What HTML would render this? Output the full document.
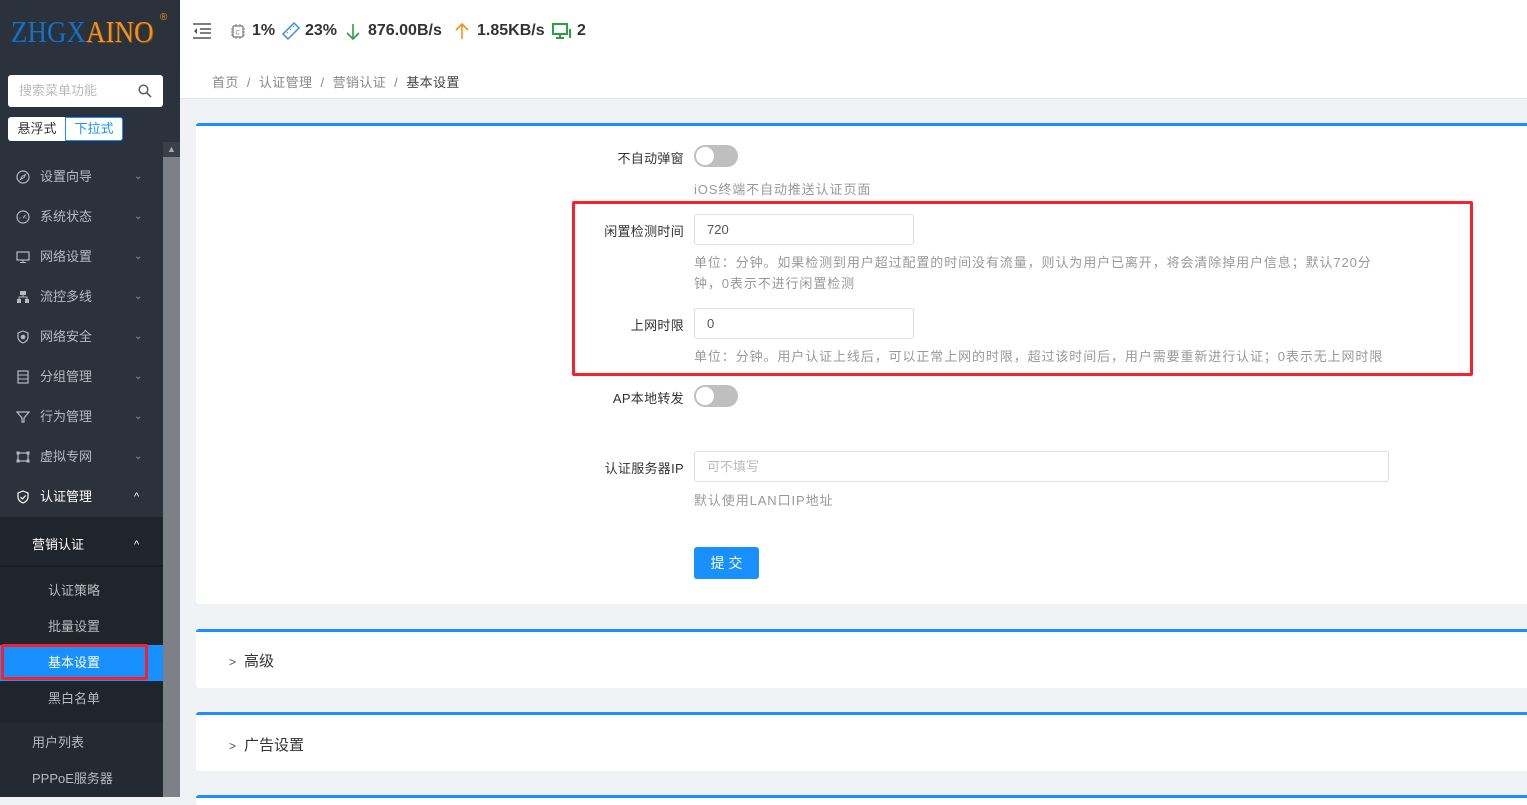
<!DOCTYPE html>
<html><head><meta charset="utf-8">
<style>
*{margin:0;padding:0;box-sizing:border-box}
body{width:1527px;height:797px;overflow:hidden;position:relative;background:#f0f2f5;font-family:"Liberation Sans","Noto Sans CJK SC",sans-serif;font-size:13px;color:#333}
.a{position:absolute}
#side{left:0;top:0;width:180px;height:797px;background:#2b323c}
#sb{left:163px;top:142px;width:17px;height:655px;background:#7d8187}
#sbt{left:163px;top:142px;width:17px;height:15px;background:#3a4049}
.mi{position:absolute;left:0;width:163px;height:40px;color:#b6bbc2;font-size:13px;line-height:40px}
.mi svg{position:absolute;left:16px;top:13px}
.mi span{position:absolute;left:40px}
.mi i{position:absolute;left:134px;top:0;font-style:normal;font-size:10px;color:#8a9099}
#hdr{left:180px;top:0;width:1347px;height:63px;background:#fff;box-shadow:0 1px 4px rgba(0,0,0,.08)}
#bc{left:180px;top:63px;width:1347px;height:36px;background:#fff;border-bottom:1px solid #e4e7ed}
.card{position:absolute;left:196px;width:1331px;background:#fff;border-top:3px solid #1890ff;border-radius:3px 0 0 3px}
.lbl{position:absolute;width:200px;text-align:right;font-size:13px;color:#333;letter-spacing:0.3px}
.help{position:absolute;left:694px;font-size:13px;color:#999;line-height:21px;letter-spacing:0.9px}
.inp{position:absolute;left:694px;height:31px;border:1px solid #dcdfe6;border-radius:3px;padding-left:12px;line-height:29px;font-size:13px;color:#555;background:#fff}
.sw{position:absolute;left:694px;width:44px;height:22px;border-radius:11px;background:#bfbfbf}
.sw:after{content:"";position:absolute;left:2px;top:2px;width:18px;height:18px;border-radius:50%;background:#fff}
.st{font-weight:bold;font-size:16px;color:#333;position:absolute;top:22px}
</style></head><body>
<div id="side" class="a">
 <div class="a" style="left:11px;top:15px;font-family:'Liberation Serif',serif;font-size:27px;letter-spacing:0;color:#1e6fb8;text-shadow:1px 1px 0 #0d3a66;transform:scaleY(1.12);transform-origin:left top;white-space:nowrap">ZHGX<span style="color:#f0911e;text-shadow:1px 1px 0 #7a4a10">AINO</span></div>
 <div class="a" style="left:160px;top:12px;font-size:10px;color:#f0911e">®</div>
 <div class="a" style="left:8px;top:75px;width:155px;height:32px;background:#fff;border-radius:3px;color:#bbb;line-height:32px;padding-left:11px;font-size:13px">搜索菜单功能
  <svg class="a" style="left:130px;top:9px" width="14" height="14" viewBox="0 0 14 14"><circle cx="5.5" cy="5.5" r="4.3" fill="none" stroke="#555" stroke-width="1.4"/><path d="M8.7 8.7L13 13" stroke="#555" stroke-width="1.5"/></svg></div>
 <div class="a" style="left:8px;top:117px;width:58px;height:24px;background:#fff;border-radius:3px 0 0 3px;color:#333;text-align:center;line-height:24px">悬浮式</div>
 <div class="a" style="left:65px;top:117px;width:58px;height:24px;background:#fff;border:1px solid #1890ff;border-radius:0 3px 3px 0;color:#1890ff;text-align:center;line-height:22px">下拉式</div>

 <div class="mi" style="top:157px"><svg width="14" height="14" viewBox="0 0 14 14"><circle cx="7" cy="7" r="6" fill="none" stroke="#b6bbc2" stroke-width="1.2"/><path d="M9.5 4.5L6 6.5 4.5 9.5 8 7.5z" fill="none" stroke="#b6bbc2"/></svg><span>设置向导</span><i>⌄</i></div>
 <div class="mi" style="top:197px"><svg width="14" height="14" viewBox="0 0 14 14"><circle cx="7" cy="7" r="6" fill="none" stroke="#b6bbc2" stroke-width="1.2"/><path d="M7 8L9.5 5M3.5 8h1M9.5 8h1" stroke="#b6bbc2"/></svg><span>系统状态</span><i>⌄</i></div>
 <div class="mi" style="top:237px"><svg width="14" height="14" viewBox="0 0 14 14"><rect x="1" y="2" width="12" height="8" fill="none" stroke="#b6bbc2" stroke-width="1.2"/><path d="M7 10v2M4 12.5h6" stroke="#b6bbc2"/></svg><span>网络设置</span><i>⌄</i></div>
 <div class="mi" style="top:277px"><svg width="14" height="14" viewBox="0 0 14 14"><rect x="4" y="1" width="6" height="4" fill="#b6bbc2"/><rect x="1" y="9" width="4" height="4" fill="#b6bbc2"/><rect x="9" y="9" width="4" height="4" fill="#b6bbc2"/><path d="M7 5v2M3 9V7h8v2" stroke="#b6bbc2" fill="none"/></svg><span>流控多线</span><i>⌄</i></div>
 <div class="mi" style="top:317px"><svg width="14" height="14" viewBox="0 0 14 14"><path d="M7 1L12 3v4c0 3-2.5 5-5 6-2.5-1-5-3-5-6V3z" fill="none" stroke="#b6bbc2" stroke-width="1.2"/><circle cx="7" cy="7" r="2.3" fill="#b6bbc2"/></svg><span>网络安全</span><i>⌄</i></div>
 <div class="mi" style="top:357px"><svg width="14" height="14" viewBox="0 0 14 14"><rect x="2" y="1" width="10" height="12" fill="none" stroke="#b6bbc2" stroke-width="1.2"/><path d="M2 5h10M2 9h10" stroke="#b6bbc2"/></svg><span>分组管理</span><i>⌄</i></div>
 <div class="mi" style="top:397px"><svg width="14" height="14" viewBox="0 0 14 14"><path d="M1 2h12L8 8v4H6V8z" fill="none" stroke="#b6bbc2" stroke-width="1.2"/></svg><span>行为管理</span><i>⌄</i></div>
 <div class="mi" style="top:437px"><svg width="14" height="14" viewBox="0 0 14 14"><rect x="2" y="3" width="10" height="8" fill="none" stroke="#b6bbc2" stroke-width="1.2"/><rect x="0.5" y="1.5" width="3" height="3" fill="#b6bbc2"/><rect x="10.5" y="1.5" width="3" height="3" fill="#b6bbc2"/><rect x="0.5" y="9.5" width="3" height="3" fill="#b6bbc2"/><rect x="10.5" y="9.5" width="3" height="3" fill="#b6bbc2"/></svg><span>虚拟专网</span><i>⌄</i></div>
 <div class="mi" style="top:477px;color:#fff"><svg width="14" height="14" viewBox="0 0 14 14"><path d="M7 1L12 3v4c0 3-2.5 5-5 6-2.5-1-5-3-5-6V3z" fill="none" stroke="#fff" stroke-width="1.2"/><path d="M4.5 7l2 2 3-3.5" fill="none" stroke="#fff" stroke-width="1.2"/></svg><span>认证管理</span><i style="color:#fff;font-size:11px">^</i></div>
 <div class="a" style="left:0;top:517px;width:163px;height:280px;background:#1f252c"></div>
 <div class="mi" style="top:525px;color:#fff"><span style="left:32px">营销认证</span><i style="color:#fff;font-size:11px">^</i></div>
 <div class="a" style="left:0;top:565px;width:163px;height:2px;background:#191e24"></div>
 <div class="mi" style="top:573px;height:36px;line-height:36px"><span style="left:48px">认证策略</span></div>
 <div class="mi" style="top:609px;height:36px;line-height:36px"><span style="left:48px">批量设置</span></div>
 <div class="a" style="left:0;top:645px;width:163px;height:36px;background:#1890ff"></div>
 <div class="a" style="left:1px;top:644px;width:147px;height:36px;border:3px solid #f5222d;border-radius:2px"></div>
 <div class="mi" style="top:645px;height:36px;line-height:36px;color:#fff"><span style="left:48px">基本设置</span></div>
 <div class="mi" style="top:681px;height:36px;line-height:36px"><span style="left:48px">黑白名单</span></div>
 <div class="a" style="left:0;top:723px;width:163px;height:74px;background:#242a31"></div>
 <div class="mi" style="top:725px;height:36px;line-height:36px"><span style="left:32px">用户列表</span></div>
 <div class="mi" style="top:761px;height:36px;line-height:36px"><span style="left:32px">PPPoE服务器</span></div>
</div>
<div id="sb" class="a"></div><div id="sbt" class="a"><div style="color:#aaa;font-size:9px;text-align:center;line-height:15px">▲</div></div>

<div id="hdr" class="a">
 <svg class="a" style="left:13px;top:23px" width="18" height="16" viewBox="0 0 18 16"><path d="M0 1h18M7 6h11M7 10h11M0 15h18" stroke="#555" stroke-width="1.6"/><path d="M4 5L1 8l3 3z" fill="#555"/></svg>
 <svg class="a" style="left:50px;top:23px" width="16" height="17" viewBox="0 0 16 17"><rect x="3" y="3" width="10" height="11" rx="1" fill="none" stroke="#777" stroke-width="1.2"/><path d="M1 6h2M1 9h2M1 12h2M13 6h2M13 9h2M13 12h2M6 1v2M10 1v2M6 14v2M10 14v2" stroke="#777"/><text x="5.5" y="11.5" font-size="6" fill="#777" font-family="Liberation Sans">C</text></svg>
 <div class="a st" style="left:72px">1%</div>
 <svg class="a" style="left:101px;top:21px" width="20" height="20" viewBox="0 0 20 20"><path d="M2 13L13 2l5 5L7 18z" fill="none" stroke="#3a8ee6" stroke-width="1.5"/><path d="M6 11l1 1M9 8l1 1M12 5l1 1" stroke="#3a8ee6"/></svg>
 <div class="a st" style="left:125px">23%</div>
 <svg class="a" style="left:165px;top:23px" width="16" height="18" viewBox="0 0 16 18"><path d="M8 1v15M2 10l6 6 6-6" fill="none" stroke="#2ea043" stroke-width="1.6"/></svg>
 <div class="a st" style="left:188px">876.00B/s</div>
 <svg class="a" style="left:274px;top:22px" width="16" height="18" viewBox="0 0 16 18"><path d="M8 17V2M2 8l6-6 6 6" fill="none" stroke="#f0911e" stroke-width="1.6"/></svg>
 <div class="a st" style="left:297px">1.85KB/s</div>
 <svg class="a" style="left:372px;top:23px" width="20" height="17" viewBox="0 0 20 17"><rect x="1" y="1" width="14" height="10" fill="none" stroke="#2ea043" stroke-width="2"/><path d="M8 11v3M4 15h8M18 6v9" stroke="#2ea043" stroke-width="2"/></svg>
 <div class="a st" style="left:397px">2</div>
</div>
<div id="bc" class="a"><div class="a" style="left:32px;top:9px;color:#888;font-size:13px;letter-spacing:0.4px">首页 &nbsp;/&nbsp; 认证管理 &nbsp;/&nbsp; 营销认证 &nbsp;/&nbsp; <span style="color:#444">基本设置</span></div></div>

<div class="card" style="top:123px;height:481px"></div>
<div class="lbl" style="left:484px;top:148px">不自动弹窗</div>
<div class="sw" style="top:145px"></div>
<div class="help" style="top:179px">iOS终端不自动推送认证页面</div>
<div class="a" style="left:572px;top:201px;width:901px;height:175px;border:3px solid #f5222d;border-radius:2px"></div>
<div class="lbl" style="left:484px;top:221px">闲置检测时间</div>
<div class="inp" style="top:214px;width:220px">720</div>
<div class="help" style="top:252px;width:760px;white-space:nowrap">单位：分钟。如果检测到用户超过配置的时间没有流量，则认为用户已离开，将会清除掉用户信息；默认720分<br>钟，0表示不进行闲置检测</div>
<div class="lbl" style="left:484px;top:315px">上网时限</div>
<div class="inp" style="top:308px;width:220px">0</div>
<div class="help" style="top:346px;width:760px;white-space:nowrap">单位：分钟。用户认证上线后，可以正常上网的时限，超过该时间后，用户需要重新进行认证；0表示无上网时限</div>
<div class="lbl" style="left:484px;top:388px">AP本地转发</div>
<div class="sw" style="top:385px"></div>
<div class="lbl" style="left:484px;top:458px">认证服务器IP</div>
<div class="inp" style="top:451px;width:695px;color:#bbb">可不填写</div>
<div class="help" style="top:490px">默认使用LAN口IP地址</div>
<div class="a" style="left:694px;top:547px;width:65px;height:32px;background:#1890ff;border-radius:3px;color:#fff;text-align:center;line-height:32px;font-size:14px">提 交</div>

<div class="card" style="top:629px;height:59px"><div class="a" style="left:33px;top:18px;font-size:15px;color:#333"><span style="font-size:12px;color:#555;margin-right:8px">&gt;</span>高级</div></div>
<div class="card" style="top:712px;height:59px"><div class="a" style="left:33px;top:19px;font-size:15px;color:#333"><span style="font-size:12px;color:#555;margin-right:8px">&gt;</span>广告设置</div></div>
<div class="card" style="top:795px;height:10px"></div>
</body></html>
